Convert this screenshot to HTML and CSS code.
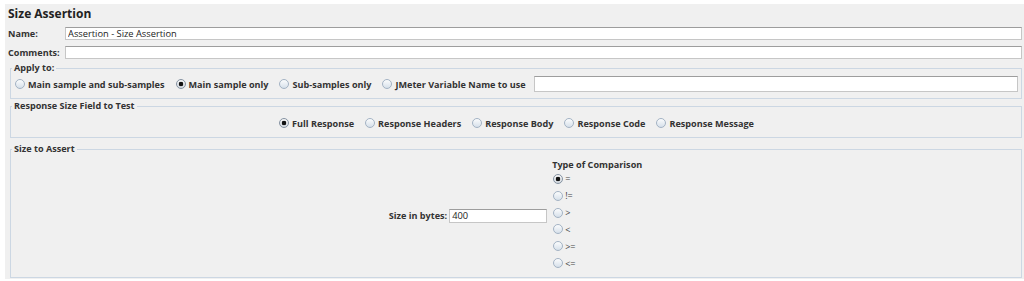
FILE: index.html
```html
<!DOCTYPE html>
<html>
<head>
<meta charset="utf-8">
<title>Size Assertion</title>
<link rel="stylesheet" href="styles.css">
</head>
<body>
<div class="panel">
  <div class="title">Size Assertion</div>
  <div class="row"><span class="lbl">Name:</span><input class="txt" type="text" value="Assertion - Size Assertion"></div>
  <div class="row row2"><span class="lbl">Comments:</span><input class="txt" type="text" value=""></div>

  <fieldset class="box apply">
    <legend>Apply to:</legend>
    <div class="opts">
      <label class="opt"><input type="radio" name="apply"><span>Main sample and sub-samples</span></label>
      <label class="opt"><input type="radio" name="apply" checked><span>Main sample only</span></label>
      <label class="opt"><input type="radio" name="apply"><span>Sub-samples only</span></label>
      <label class="opt"><input type="radio" name="apply"><span>JMeter Variable Name to use</span></label>
      <input class="txt var" type="text" value="">
    </div>
  </fieldset>

  <fieldset class="box field">
    <legend>Response Size Field to Test</legend>
    <div class="opts centered">
      <label class="opt"><input type="radio" name="fld" checked><span>Full Response</span></label>
      <label class="opt"><input type="radio" name="fld"><span>Response Headers</span></label>
      <label class="opt"><input type="radio" name="fld"><span>Response Body</span></label>
      <label class="opt"><input type="radio" name="fld"><span>Response Code</span></label>
      <label class="opt"><input type="radio" name="fld"><span>Response Message</span></label>
    </div>
  </fieldset>

  <fieldset class="box size">
    <legend>Size to Assert</legend>
    <div class="size-inner">
      <div class="bytes"><span class="blbl">Size in bytes:</span><input class="txt num" type="text" value="400"></div>
      <div class="cmp">
        <div class="cmp-title">Type of Comparison</div>
        <label class="copt"><input type="radio" name="cmp" checked><span>=</span></label>
        <label class="copt"><input type="radio" name="cmp"><span>!=</span></label>
        <label class="copt"><input type="radio" name="cmp"><span>&gt;</span></label>
        <label class="copt"><input type="radio" name="cmp"><span>&lt;</span></label>
        <label class="copt"><input type="radio" name="cmp"><span>&gt;=</span></label>
        <label class="copt"><input type="radio" name="cmp"><span>&lt;=</span></label>
      </div>
    </div>
  </fieldset>
</div>
</body>
</html>
```

FILE: styles.css
```css
* { box-sizing: border-box; }
html, body { margin: 0; background: #fff; }
body {
  font-family: "Open Sans", "DejaVu Sans", sans-serif;
  font-size: 9.1px;
  color: #222;
  overflow: hidden;
}
.panel {
  margin: 4px 0 0 5px;
  height: 275px;
  background: #f0f0f0;
  padding: 1px 2px 1px 3px;
  display: flex;
  flex-direction: column;
}
.title {
  font-size: 12px;
  font-weight: 700;
  line-height: 18px;
  height: 18px;
  color: #222;
}
.row {
  display: flex;
  align-items: center;
  margin-top: 4px;
  height: 13px;
}
.row2 { margin-top: 6px; }
.lbl {
  width: 57px;
  flex: none;
  font-weight: 700;
  color: #333;
}
.txt {
  flex: 1;
  min-width: 0;
  height: 13px;
  border: 1px solid #c6c6c6;
  border-top-color: #9d9d9d;
  background: #fff;
  font-family: inherit;
  font-size: 9.3px;
  color: #222;
  padding: 0 2px;
  margin: 0;
  outline: none;
}
.box {
  margin: 3px 0 0 2px;
  border: 1px solid #ccd7e3;
  padding: 2px 3px 6px 4px;
  min-width: 0;
}
legend {
  font-weight: 700;
  line-height: 12px;
  padding: 0 2px;
  margin-left: -3px;
  color: #333;
}
.opts {
  display: flex;
  align-items: center;
  gap: 11px;
  height: 16px;
  font-weight: 700;
  color: #333;
}
.opt {
  display: flex;
  align-items: center;
  white-space: nowrap;
}
input[type=radio] {
  appearance: none;
  -webkit-appearance: none;
  width: 10px;
  height: 10px;
  border-radius: 50%;
  border: 1px solid #a3b3c4;
  background: linear-gradient(#fbfcfd, #d6e0ea);
  margin: 0 3px 0 0;
  flex: none;
}
input[type=radio]:checked {
  background: radial-gradient(circle, #111 0 2px, transparent 2.6px), linear-gradient(#f6f6f6, #d2d8df);
  border-color: #8593a2;
}
.var {
  height: 16px;
  margin-left: -3px;
}
.field { margin-top: 1px; padding-bottom: 7px; }
.field .opts { margin-top: 2px; height: 14px; }
.centered { justify-content: center; }
.size {
  margin-top: 5px;
  flex: 1;
  padding: 3px 3px 4px 4px;
  display: flex;
}
.size-inner {
  flex: 1;
  display: flex;
  justify-content: center;
  align-items: center;
  gap: 5px;
  padding-right: 2px;
}
.bytes {
  display: flex;
  align-items: center;
  gap: 2px;
}
.blbl { font-weight: 700; color: #333; }
.num {
  flex: none;
  width: 98px;
  height: 14px;
}
.cmp {
  display: flex;
  flex-direction: column;
  font-weight: 700;
  color: #333;
}
.cmp-title { line-height: 11px; height: 11px; }
.copt {
  display: flex;
  align-items: center;
  height: 16.85px;
  font-weight: 400;
  color: #444;
}
.copt input[type=radio] { margin-left: 1px; margin-right: 2px; }
```
